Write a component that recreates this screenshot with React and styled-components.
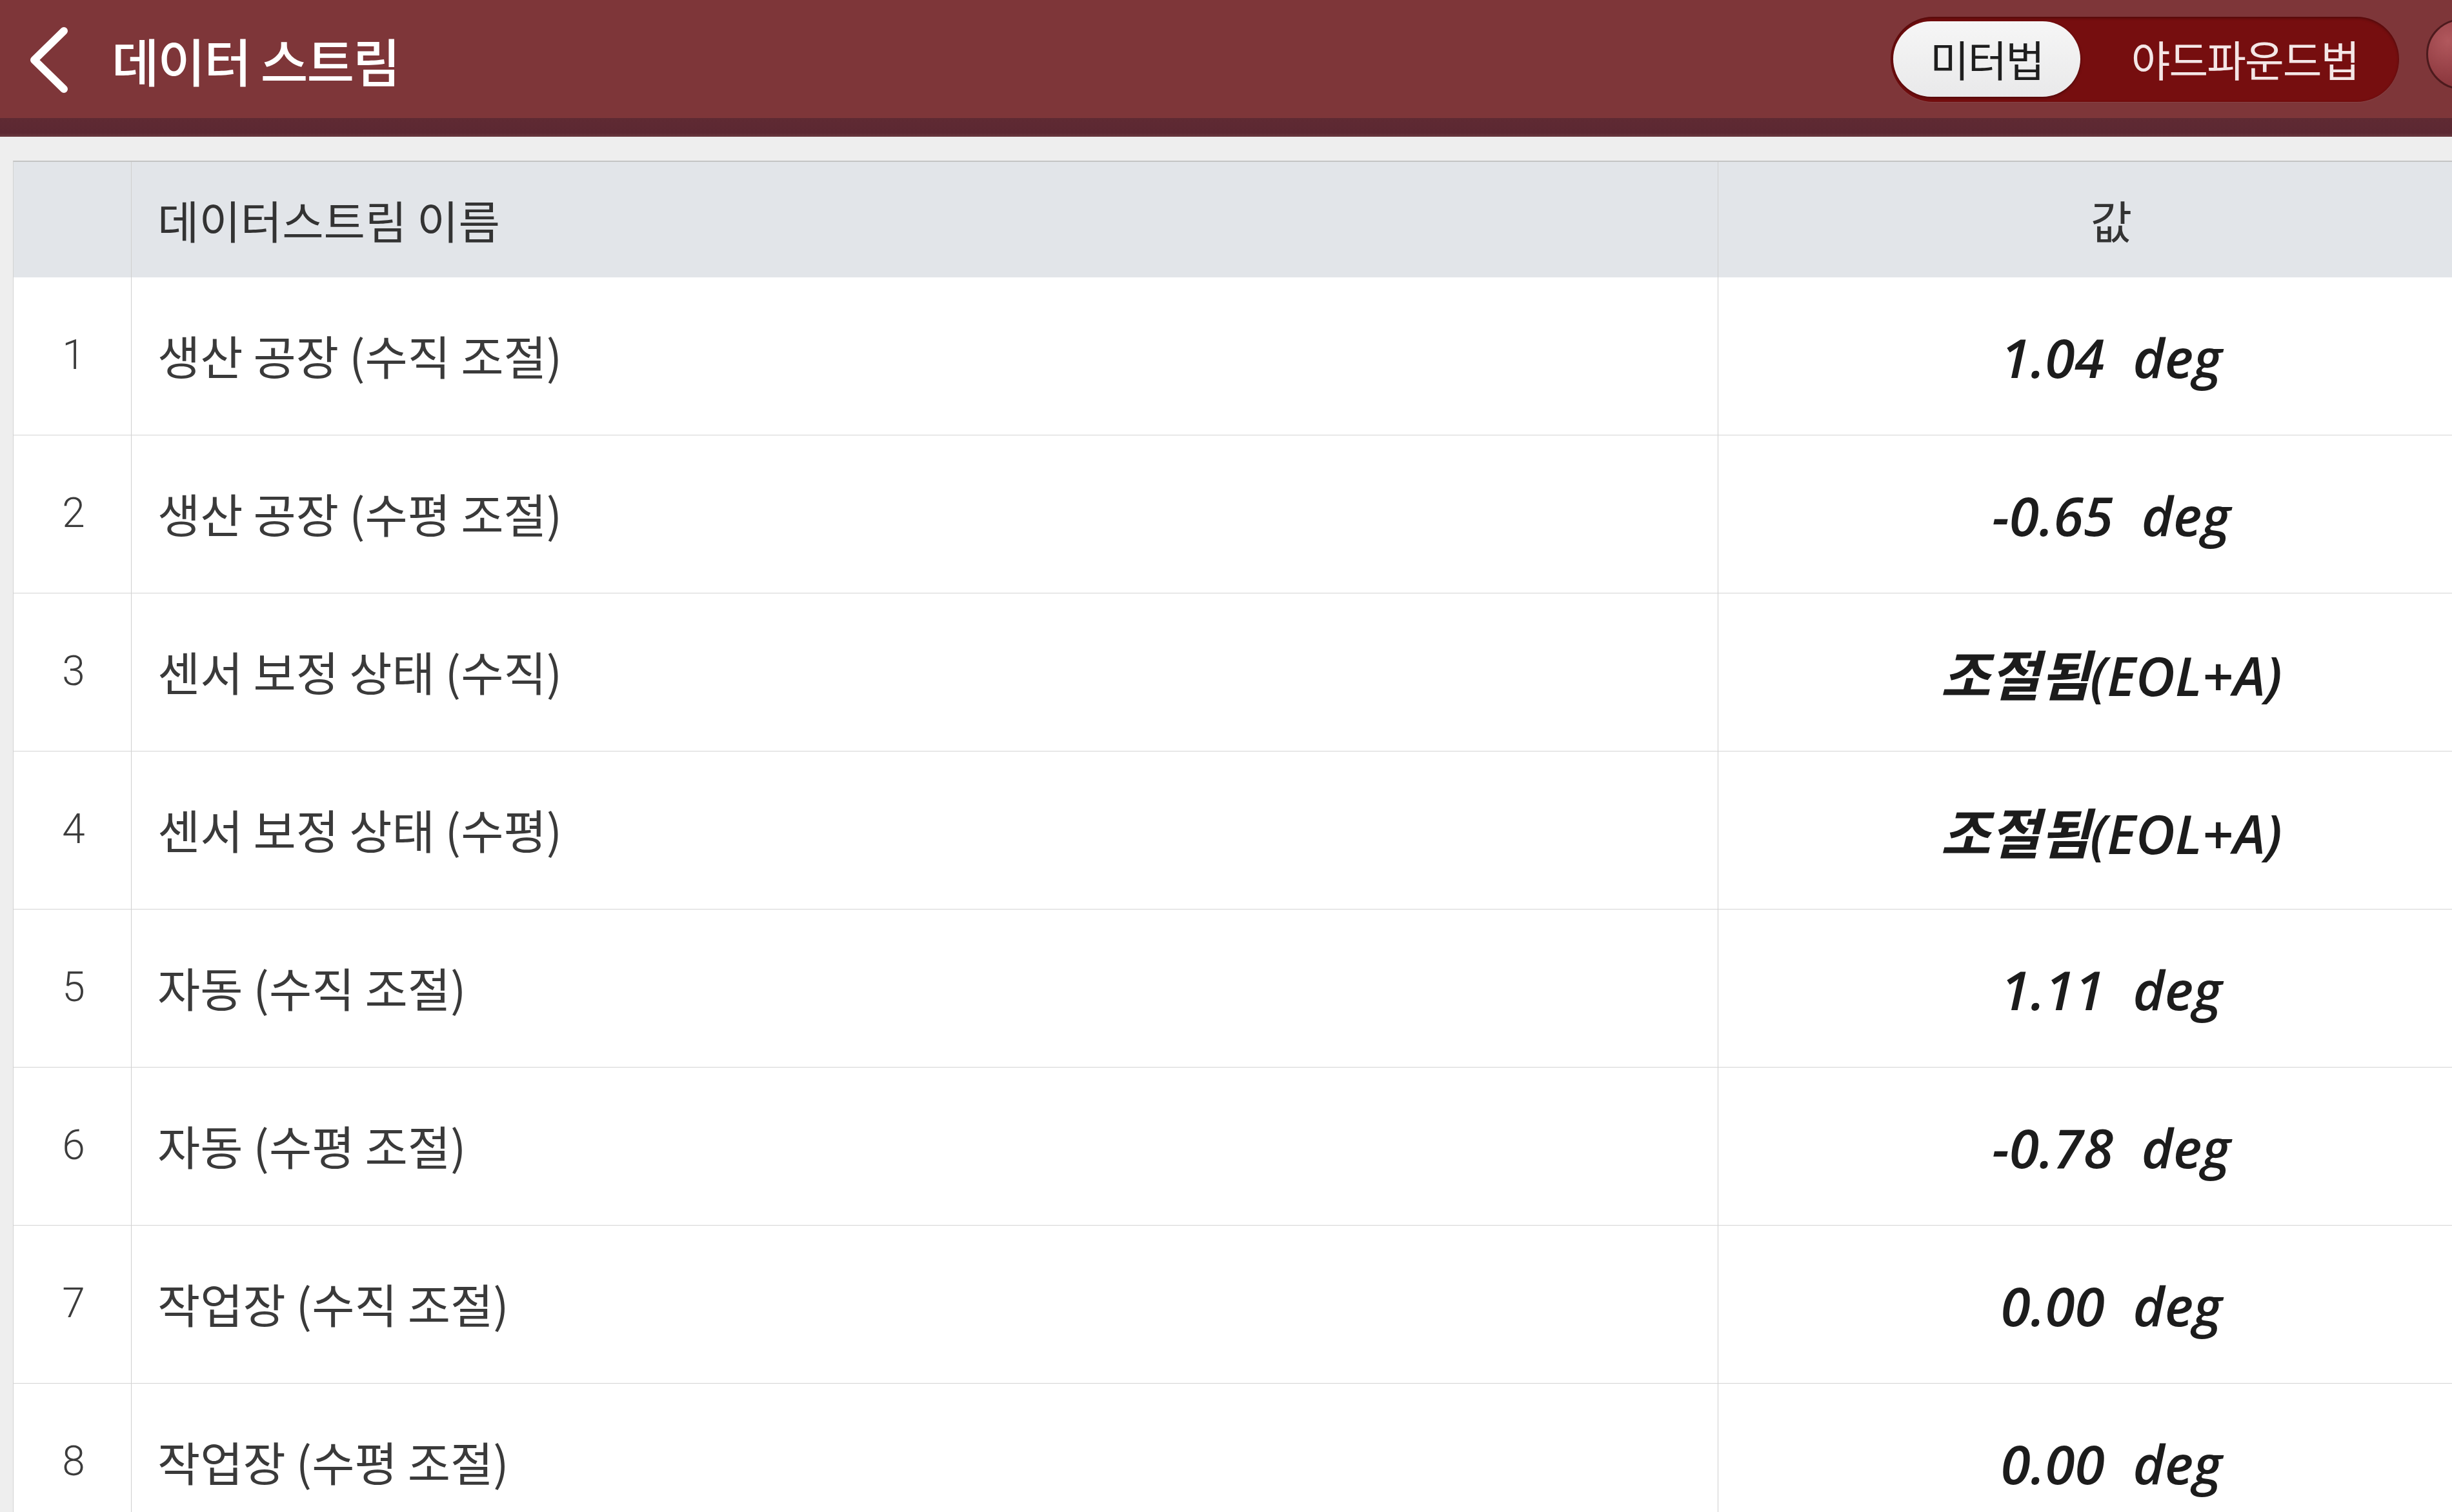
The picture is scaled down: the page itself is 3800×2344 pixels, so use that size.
import React from "react";
import styled, { createGlobalStyle } from "styled-components";

const Global = createGlobalStyle`
  html, body {
    margin: 0;
    padding: 0;
    width: 3800px;
    height: 2344px;
    overflow: hidden;
    background: #eeeeee;
    font-family: "Noto Sans CJK KR", "Noto Sans", sans-serif;
  }
`;

const Page = styled.div`
  width: 3800px;
  height: 2344px;
  overflow: hidden;
  background: #eeeeee;
  display: flex;
  flex-direction: column;
`;

const AppBar = styled.header`
  height: 183px;
  flex: none;
  background: #7e3639;
  display: flex;
  align-items: center;
  padding-left: 44px;
  box-sizing: border-box;
`;

const AppBarEdge = styled.div`
  height: 29px;
  flex: none;
  background: linear-gradient(#5f2a33, #5c2832 80%, #6a3a40);
`;

const BackButton = styled.button`
  width: 66px;
  height: 110px;
  padding: 0;
  border: none;
  background: none;
  display: flex;
  align-items: center;
  justify-content: center;
  margin-top: 4px;
`;

const Title = styled.h1`
  margin: 0 0 0 63px;
  font-family: "Noto Sans CJK KR", sans-serif;
  font-size: 80px;
  font-weight: 500;
  color: #ffffff;
  letter-spacing: -2px;
  line-height: 1;
  margin-top: 0;
`;

const Spacer = styled.div`
  flex: 1;
`;

const Toggle = styled.div`
  display: flex;
  align-items: center;
  height: 132px;
  width: 788px;
  box-sizing: border-box;
  padding: 0 4px;
  border-radius: 66px;
  background: #760e0f;
  box-shadow: inset 0 2px 4px rgba(0, 0, 0, 0.35), 0 1px 0 rgba(255, 255, 255, 0.08);
`;

const Segment = styled.div`
  height: 117px;
  width: ${(p) => (p.$active ? "290px" : "auto")};
  flex: ${(p) => (p.$active ? "none" : "1")};
  border-radius: 59px;
  display: flex;
  align-items: center;
  justify-content: center;
  font-family: "Noto Sans CJK KR", sans-serif;
  font-size: 66px;
  font-weight: 400;
  letter-spacing: -2px;
  color: ${(p) => (p.$active ? "#1e1e1e" : "#f4e6e6")};
  background: ${(p) => (p.$active ? "linear-gradient(#f6f6f6, #e9e9ea)" : "transparent")};
  box-shadow: ${(p) => (p.$active ? "0 2px 4px rgba(0,0,0,0.35)" : "none")};
  padding-bottom: 4px;
  padding-left: ${(p) => (p.$active ? "0" : "20px")};
  box-sizing: border-box;
`;

const RoundButton = styled.div`
  width: 110px;
  height: 110px;
  flex: none;
  border-radius: 50%;
  margin-left: 42px;
  margin-right: -70px;
  margin-bottom: 16px;
  box-sizing: border-box;
  border: 3px solid #4c1a1d;
  background: radial-gradient(circle at 30% 30%, #b1585d, #8f3a40 60%, #7a2d33);
  display: flex;
  align-items: center;
  justify-content: center;
  color: #ffffff;
  font-family: "Noto Sans", sans-serif;
  font-size: 60px;
  font-weight: 700;
`;

const Table = styled.div`
  margin: 37px 0 0 20px;
  width: 3861px;
  border-top: 2px solid #c4c4c4;
  border-left: 1px solid #d2d2d2;
  background: #ffffff;
  box-sizing: border-box;
`;

const Row = styled.div`
  display: grid;
  grid-template-columns: 183px 2459px 1218px;
  height: ${(p) => (p.$head ? "179px" : "245px")};
  box-sizing: border-box;
  background: ${(p) => (p.$head ? "#e2e5e9" : "#ffffff")};
  border-bottom: ${(p) => (p.$head ? "none" : "1px solid #d4d4d4")};
`;

const Cell = styled.div`
  display: flex;
  align-items: center;
  box-sizing: border-box;
  border-right: ${(p) => (p.$last ? "none" : "1px solid #cfcfcf")};
  justify-content: ${(p) => (p.$align === "center" ? "center" : "flex-start")};
  padding-left: ${(p) => (p.$align === "center" ? "0" : "40px")};
`;

const IndexText = styled.span`
  font-family: Roboto, "Noto Sans", sans-serif;
  font-size: 64px;
  font-weight: 300;
  color: #3c3c3c;
  margin-left: 4px;
  margin-bottom: 4px;
`;

const NameText = styled.span`
  font-family: "Noto Sans CJK KR", sans-serif;
  font-size: 72px;
  font-weight: 400;
  color: #3a3a3a;
  letter-spacing: 0;
  margin-bottom: 6px;
`;

const HeadText = styled(NameText)`
  font-size: 70px;
  color: #333333;
  margin-bottom: 0;
`;

const ValueText = styled.span`
  font-family: "Open Sans", "Noto Sans CJK KR", sans-serif;
  font-style: italic;
  font-weight: 600;
  font-size: 84px;
  color: #1c1c1c;
  white-space: pre;
  margin-top: 2px;
`;

const rows = [
  ["생산 공장 (수직 조절)", "1.04  deg"],
  ["생산 공장 (수평 조절)", "-0.65  deg"],
  ["센서 보정 상태 (수직)", "조절됨(EOL+A)"],
  ["센서 보정 상태 (수평)", "조절됨(EOL+A)"],
  ["자동 (수직 조절)", "1.11  deg"],
  ["자동 (수평 조절)", "-0.78  deg"],
  ["작업장 (수직 조절)", "0.00  deg"],
  ["작업장 (수평 조절)", "0.00  deg"],
];

export default function App() {
  return (
    <Page>
      <Global />
      <AppBar>
        <BackButton aria-label="back">
          <svg width="66" height="110" viewBox="0 0 66 110">
            <polyline
              points="55,9 9,54 55,99"
              fill="none"
              stroke="#ffffff"
              strokeWidth="12"
              strokeLinecap="round"
              strokeLinejoin="round"
            />
          </svg>
        </BackButton>
        <Title>데이터 스트림</Title>
        <Spacer />
        <Toggle>
          <Segment $active>미터법</Segment>
          <Segment>야드파운드법</Segment>
        </Toggle>
        <RoundButton>?</RoundButton>
      </AppBar>
      <AppBarEdge />
      <Table>
        <Row $head>
          <Cell $align="center" />
          <Cell>
            <HeadText>데이터스트림 이름</HeadText>
          </Cell>
          <Cell $align="center" $last>
            <HeadText>값</HeadText>
          </Cell>
        </Row>
        {rows.map(([name, value], i) => (
          <Row key={i}>
            <Cell $align="center">
              <IndexText>{i + 1}</IndexText>
            </Cell>
            <Cell>
              <NameText>{name}</NameText>
            </Cell>
            <Cell $align="center" $last>
              <ValueText>{value}</ValueText>
            </Cell>
          </Row>
        ))}
      </Table>
    </Page>
  );
}
